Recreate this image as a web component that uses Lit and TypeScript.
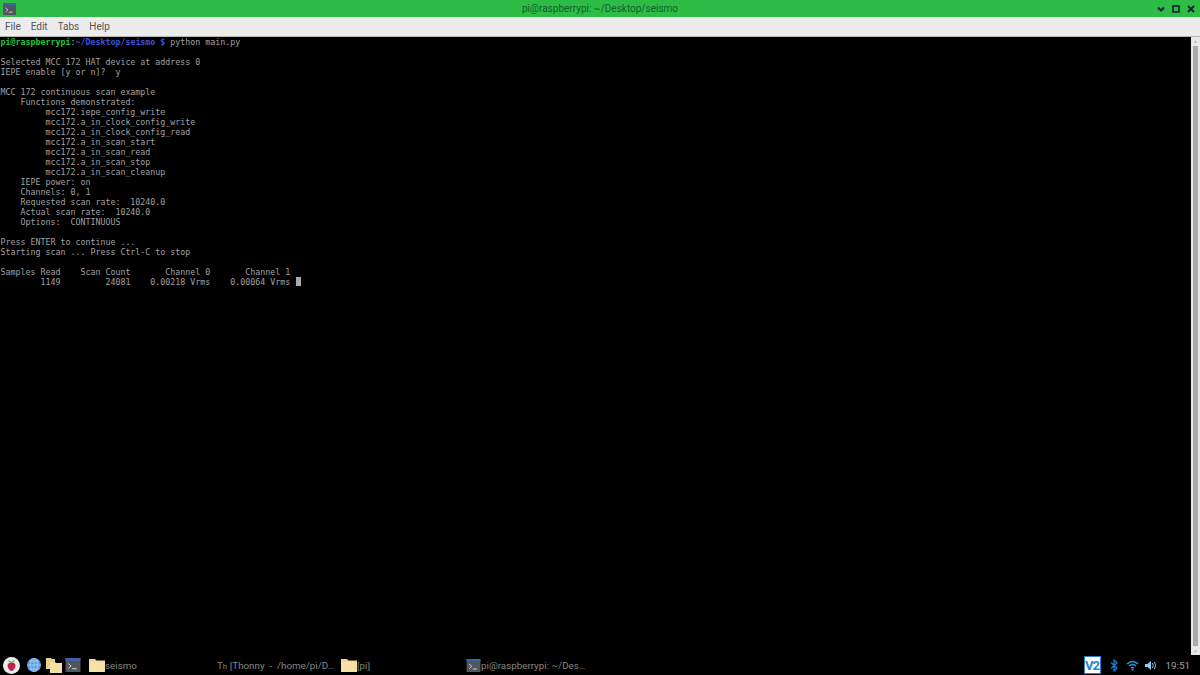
import { LitElement, html, css, svg } from "lit";
import { customElement } from "lit/decorators.js";

const LINES = [
  "",
  "Selected MCC 172 HAT device at address 0",
  "IEPE enable [y or n]?  y",
  "",
  "MCC 172 continuous scan example",
  "    Functions demonstrated:",
  "         mcc172.iepe_config_write",
  "         mcc172.a_in_clock_config_write",
  "         mcc172.a_in_clock_config_read",
  "         mcc172.a_in_scan_start",
  "         mcc172.a_in_scan_read",
  "         mcc172.a_in_scan_stop",
  "         mcc172.a_in_scan_cleanup",
  "    IEPE power: on",
  "    Channels: 0, 1",
  "    Requested scan rate:  10240.0",
  "    Actual scan rate:  10240.0",
  "    Options:  CONTINUOUS",
  "",
  "Press ENTER to continue ...",
  "Starting scan ... Press Ctrl-C to stop",
  "",
  "Samples Read    Scan Count       Channel 0       Channel 1",
];

const termIcon = (w: number, h: number) => svg`<svg width=${w} height=${h} viewBox="0 0 16 15">
  <rect width="16" height="15" fill="#50555e"/><rect width="16" height="3" fill="#3f62a8"/>
  <path d="M3 6l3 2.5L3 11" fill="none" stroke="#dedede" stroke-width="1"/><path d="M7 11.5h5" stroke="#dedede"/></svg>`;
const folder = (w: number, h: number) => svg`<svg width=${w} height=${h} viewBox="0 0 16 13">
  <path d="M0 0h6l1.500 1.500H16V13H0z" fill="#eed48e"/><path d="M0 2.500h16V13H0z" fill="#f6e2a6"/></svg>`;

@customElement("app-root")
export class AppRoot extends LitElement {
  static styles = css`
    :host { display: flex; flex-direction: column; width: 1200px; height: 675px; overflow: hidden; background: #000; font-family: Roboto, "Liberation Sans", sans-serif; }
    .title { height: 17px; background: #2dbd47; display: grid; grid-template-columns: 1fr auto 1fr; align-items: center; padding: 0 5px; font-size: 10px; flex: none; }
    .title-text { color: #14602a; }
    .controls { display: flex; gap: 7px; align-items: center; justify-self: end; }
    .title-icon { display: flex; margin-left: -3px; }
    .menu { height: 19px; background: #ececec; border-bottom: 1px solid #b5b5b5; display: flex; align-items: center; gap: 10px; padding: 0 5px; font-size: 10px; color: #555; flex: none; }
    .body { flex: 1; display: flex; min-height: 0; }
    .term { flex: 1; background: #000; padding-left: 0.5px; font-family: "DejaVu Sans Mono", monospace; font-size: 8.3px; line-height: 10px; color: #a0a0a0; overflow: hidden; }
    .row { height: 10px; white-space: pre; }
    .g { color: #1fc43f; font-weight: bold; }
    .b { color: #3f51d8; font-weight: bold; }
    .w { color: #b8b8b8; }
    .cur { display: inline-block; width: 5px; height: 9px; margin-left: 0.5px; background: #aaa; vertical-align: -1px; }
    .scroll { width: 9px; background: #e8e8e8; display: flex; flex-direction: column; align-items: center; }
    .thumb { width: 5px; flex: 1; background: #a8a8a8; margin: 1px 0; }
    .arrow { font-size: 5px; line-height: 8px; color: #bbb; height: 8px; }
    .task { height: 20px; background: #000; display: flex; align-items: center; color: #858585; font-size: 9.8px; flex: none; }
    .ico { display: flex; align-items: center; margin-left: 5px; }
    .btn { display: flex; align-items: center; overflow: hidden; white-space: pre; }
    .tray { margin-left: auto; display: flex; align-items: center; gap: 9px; padding-right: 10px; color: #a0a0a0; }
    .ve { width: 17px; height: 18px; background: #fff; border: 1px solid #2a7fd0; color: #2a7fd0; font-size: 13px; font-weight: bold; display: flex; align-items: center; justify-content: center; letter-spacing: -1px; box-sizing: border-box; }
    .bt { margin-right: -1px; }
    .vol { margin-left: -3px; }
    .m3 { margin-left: 3px; }
    .m7 { margin-left: 7px; }
    .seismo { margin-left: 8px; width: 128px; }
    .thonny { width: 124px; }
    .pifold { width: 125px; }
    .small-h { font-size: 8px; }
  `;
  render() {
    return html`
      <div class="title">
        <div class="title-icon">${termIcon(15, 12)}</div>
        <div class="title-text">pi@raspberrypi: ~/Desktop/seismo</div>
        <div class="controls">
          <svg width="8" height="8" viewBox="0 0 8 8"><path d="M1 2.500L4 5.500L7 2.500" fill="none" stroke="#123" stroke-width="2"/></svg>
          <svg width="8" height="8" viewBox="0 0 8 8"><rect x="1" y="1" width="6" height="6" fill="none" stroke="#123" stroke-width="1.600"/></svg>
          <svg width="8" height="8" viewBox="0 0 8 8"><path d="M1 1L7 7M7 1L1 7" stroke="#123" stroke-width="1.800"/></svg>
        </div>
      </div>
      <div class="menu"><span>File</span><span>Edit</span><span>Tabs</span><span>Help</span></div>
      <div class="body">
        <div class="term">
          <div class="row"><span class="g">pi@raspberrypi</span><span class="w">:</span><span class="b">~/Desktop/seismo $</span> python main.py</div>
          ${LINES.map((l) => html`<div class="row">${l}</div>`)}
          <div class="row">        1149         24081    0.00218 Vrms    0.00064 Vrms <span class="cur"></span></div>
        </div>
        <div class="scroll"><span class="arrow">▲</span><div class="thumb"></div><span class="arrow">▼</span></div>
      </div>
      <div class="task">
        <div class="ico m3">
          <svg width="17" height="17" viewBox="0 0 17 17"><circle cx="8.500" cy="8.500" r="8.500" fill="#ececec"/><path d="M4.500 8.500c0-2 2-3 4-3s4 1 4 3-2 5.500-4 5.500-4-3.500-4-5.500z" fill="#c2204e"/><path d="M5 3.200q2 .3 3.500 1.800 1.500-1.500 3.500-1.800-.5 2.300-3.500 2.800-3-.5-3.500-2.800z" fill="#5fae3c"/></svg>
        </div>
        <div class="ico m7">
          <svg width="14" height="14" viewBox="0 0 14 14"><circle cx="7" cy="7" r="7" fill="#5c9be0"/><path d="M0 7h14M7 0v14M2 3h10M2 11h10" stroke="#bcd6f2" stroke-width=".7"/><ellipse cx="7" cy="7" rx="3.500" ry="7" fill="none" stroke="#bcd6f2" stroke-width=".7"/></svg>
        </div>
        <div class="ico">
          <svg width="16" height="15" viewBox="0 0 16 15"><path d="M0 0h5l1 1h3v10H0z" fill="#e8cf8c"/><path d="M4 4h5l1 1h6v10H4z" fill="#f5e0a4"/></svg>
        </div>
        <div class="ico m3">${termIcon(16, 14)}</div>
        <div class="btn seismo">${folder(16, 13)}<span>seismo</span></div>
        <div class="btn thonny"><span>T<span class="small-h">h</span> [Thonny  -  /home/pi/D…</span></div>
        <div class="btn pifold">${folder(16, 13)}<span>[pi]</span></div>
        <div class="btn">${termIcon(15, 13)}<span>pi@raspberrypi: ~/Des…</span></div>
        <div class="tray">
          <div class="ve">V2</div>
          <svg class="bt" width="8" height="13" viewBox="0 0 8 13"><path d="M1 3.500l6 5.500-3 3V1l3 3-6 5.500" fill="none" stroke="#1a7fe0" stroke-width="1.200"/></svg>
          <svg width="13" height="11" viewBox="0 0 13 11"><path d="M1 4q5.500-5 11 0M3 6q3.500-3 7 0M5 8q1.500-1 3 0" fill="none" stroke="#2b9be8" stroke-width="1.500"/><circle cx="6.500" cy="9.800" r="1" fill="#2b9be8"/></svg>
          <svg class="vol" width="12" height="11" viewBox="0 0 12 11"><path d="M0 4h2.500L6 1v9L2.500 7H0z" fill="#9ac8ee"/><path d="M7.500 3q1.500 2.500 0 5M9.500 2q2 3.500 0 7" fill="none" stroke="#9ac8ee"/></svg>
          <span>19:51</span>
        </div>
      </div>
    `;
  }
}
